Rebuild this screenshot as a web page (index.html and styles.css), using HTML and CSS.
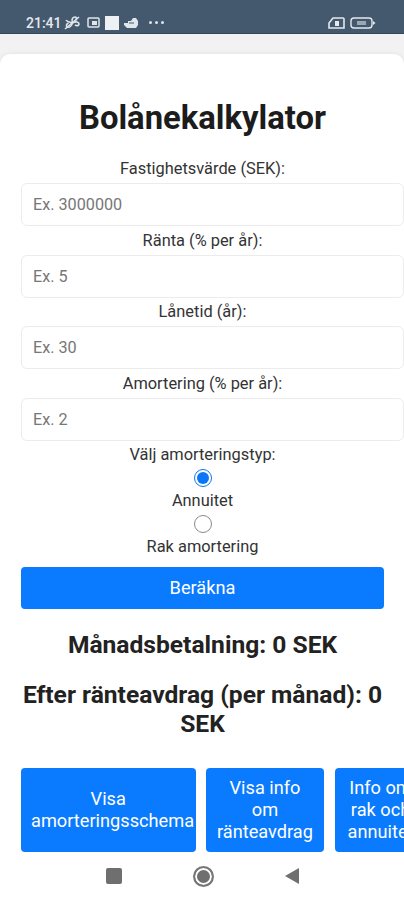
FILE: index.html
```html
<!DOCTYPE html>
<html lang="sv">
<head>
<meta charset="utf-8">
<title>Bolånekalkylator</title>
<link rel="stylesheet" href="styles.css">
</head>
<body>
<div class="status">
  <div class="status-left">
    <span class="time">21:41</span>
    <svg class="ic" width="17" height="14" viewBox="0 0 17 14"><path d="M8.5 7C7 3 9 1 11 1s2 2 .5 3.500M8.500 7C12 5 15 6 15 8s-2.500 2-4 1M8.500 7c-1 3-3 5-5 4s-1-3 1-4M8.500 7C6 6 3 6 2 4" fill="none" stroke="#dfe5ea" stroke-width="1.600"/><path d="M1 13L15 1" stroke="#dfe5ea" stroke-width="1.600"/></svg>
    <svg class="ic gap-a" width="13" height="11" viewBox="0 0 13 11"><rect x="1" y="1" width="11" height="9" rx="1" fill="none" stroke="#dfe5ea" stroke-width="1.500"/><rect x="5" y="4" width="5" height="4" fill="#dfe5ea"/></svg>
    <span class="sq"></span>
    <svg class="ic" width="14" height="10" viewBox="0 0 14 10"><path d="M0 5h4V3h3L9 0h3l2 3v4l-2 3H3L0 7z" fill="#dfe5ea"/><path d="M5 5h5" stroke="#45596e"/></svg>
    <span class="dots"><i></i><i></i><i></i></span>
  </div>
  <div class="status-right">
    <svg width="17" height="12" viewBox="0 0 17 12"><path d="M1 11V6l4-5h10a1 1 0 0 1 1 1v9z" fill="none" stroke="#e4e9ed" stroke-width="1.600"/><rect x="7" y="4" width="4" height="5" fill="#e4e9ed"/></svg>
    <svg width="26" height="12" viewBox="0 0 26 12"><rect x="1" y="1" width="21" height="10" rx="3" fill="none" stroke="#e4e9ed" stroke-width="1.400"/><path d="M23 4l2.500 2-2.500 2z" fill="#e4e9ed"/><rect x="7" y="4" width="9" height="4" fill="#9aa8b4"/></svg>
  </div>
</div>
<main class="card">
  <h1>Bolånekalkylator</h1>
  <label class="lbl">Fastighetsvärde (SEK):</label>
  <input class="field" placeholder="Ex. 3000000">
  <label class="lbl">Ränta (% per år):</label>
  <input class="field" placeholder="Ex. 5">
  <label class="lbl">Lånetid (år):</label>
  <input class="field" placeholder="Ex. 30">
  <label class="lbl">Amortering (% per år):</label>
  <input class="field" placeholder="Ex. 2">
  <div class="lbl">Välj amorteringstyp:</div>
  <span class="radio on"></span>
  <div class="lbl">Annuitet</div>
  <span class="radio"></span>
  <div class="lbl">Rak amortering</div>
  <button class="btn calc">Beräkna</button>
  <h2 class="res">Månadsbetalning: 0 SEK</h2>
  <h2 class="res">Efter ränteavdrag (per månad): 0 SEK</h2>
  <div class="actions">
    <button class="btn a1">Visa amorteringsschema</button>
    <button class="btn a2">Visa info om ränteavdrag</button>
    <button class="btn a3">Info om rak och annuitet</button>
  </div>
</main>
<nav class="navbar">
  <span class="nav-sq"></span>
  <span class="nav-home"></span>
  <svg width="14" height="16" viewBox="0 0 14 16"><path d="M14 0v16L0 8z" fill="#6f6f6f"/></svg>
</nav>
</body>
</html>
```
FILE: styles.css
```css
* { box-sizing: border-box; }
html, body { margin: 0; height: 900px; overflow: hidden; }
body { width: 404px; background: #f2f2f2; font-family: Roboto, sans-serif; color: #222; position: relative; display: flex; flex-direction: column; }
.status { height: 34px; flex: none; background: #45596e; border-bottom: 1px solid #33475c; display: flex; justify-content: space-between; align-items: center; padding: 12px 28px 0 26px; color: #e4e9ed; }
.status-left, .status-right { display: flex; align-items: center; gap: 5px; }
.time { font-size: 14px; font-weight: 500; margin-right: -3px; }
.ic.gap-a { margin-left: 1px; }
.sq { width: 14px; height: 14px; background: #eef1f3; }
.dots { display: flex; gap: 3px; margin-left: 6px; }
.dots i { width: 3px; height: 3px; border-radius: 50%; background: #dfe5ea; }
.card { margin-top: 20px; width: 404px; flex: 1; min-height: 0; overflow: hidden; background: #fff; border-radius: 10px 10px 0 0; box-shadow: 0 0 4px rgba(0,0,0,.08); display: flex; flex-direction: column; align-items: center; padding: 45px 0 0 1px; }
.card > * { flex: none; }
h1 { margin: 0 0 22px; font-size: 32.8px; line-height: 38px; font-weight: 700; color: #1c1c1c; }
.lbl { display: block; width: 100%; text-align: center; font-size: 16.4px; line-height: 20px; color: #333; }
.field { align-self: flex-start; margin: 4px 0 4.5px 20px; width: 383px; height: 43px; padding: 0 11px; border: 1px solid #ececec; border-radius: 6px; font: 16.2px Roboto, sans-serif; background: #fff; }
.field::placeholder { color: #777; }
.radio { width: 18px; height: 18px; margin: 4px 0 4px; border: 1px solid #8a8a8a; border-radius: 50%; background: #fff; }
.radio.on { border: 1.500px solid #0b76f5; padding: 2px; background: #0b76f5 content-box; }
.btn { border: 0; border-radius: 4px; background: #0a7bff; color: #fff; font: 18.2px/22px Roboto, sans-serif; padding: 0; }
.calc { align-self: flex-start; margin: 10px 0 0 20px; width: 363px; height: 42px; }
.res { width: 100%; margin: 21px 0 0; padding: 0 16px; text-align: center; font-size: 24.6px; line-height: 29px; font-weight: 700; color: #222; }
.actions { align-self: flex-start; margin: 30px 0 0 20px; display: flex; gap: 10.5px; }
.actions .btn { height: 84px; flex: none; padding: 0 10px; }
.a1 { width: 174.5px; }
.a2 { width: 118px; }
.a3 { width: 92px; }
.navbar { position: absolute; left: 0; right: 0; bottom: 0; height: 48px; background: #fff; display: flex; align-items: center; justify-content: center; gap: 71px; }
.nav-sq { width: 16px; height: 16px; border-radius: 2px; background: #6f6f6f; }
.nav-home { width: 21px; height: 21px; border-radius: 50%; border: 2px solid #777; background: #6f6f6f; box-shadow: inset 0 0 0 2px #fff; }
```
